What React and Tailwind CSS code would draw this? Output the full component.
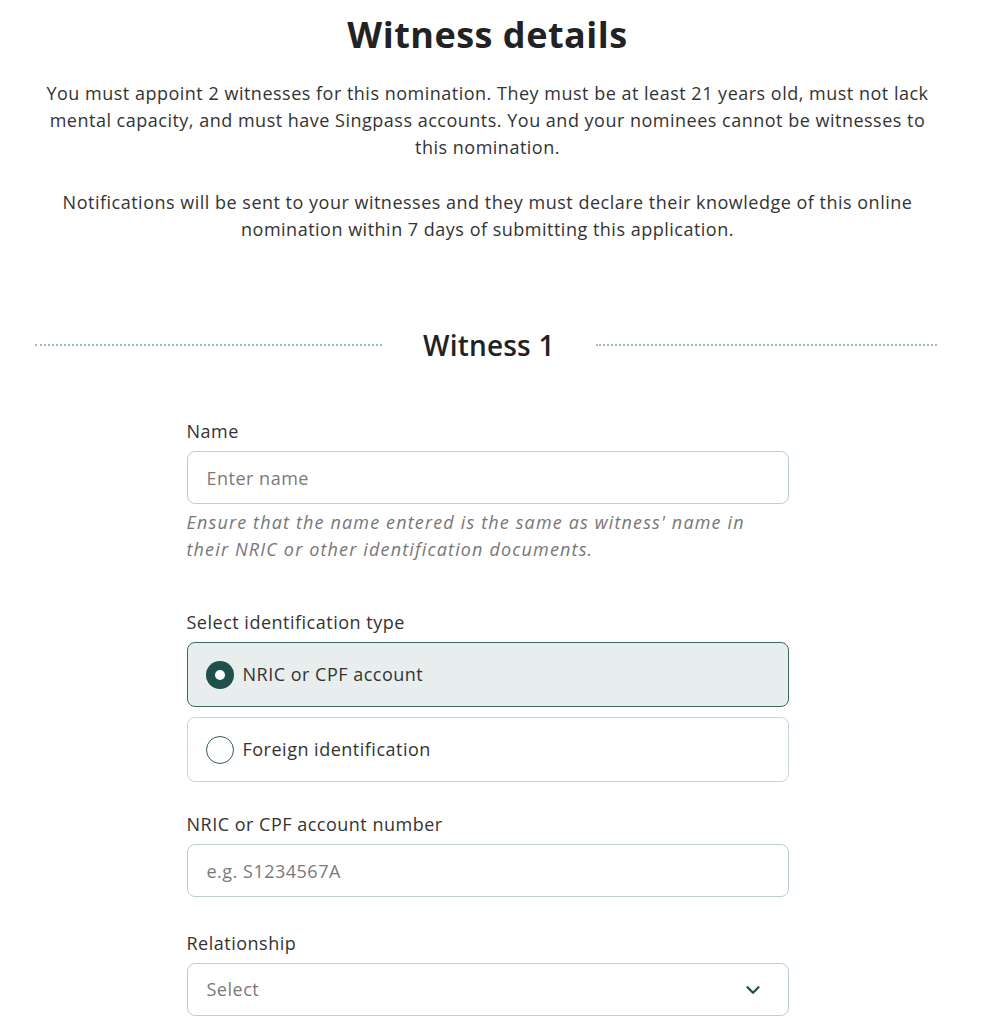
import { ChevronDown } from "lucide-react";

const font = { fontFamily: '"Open Sans", "Noto Sans", sans-serif' };

const Label = ({ children }) => (
  <div className="text-[18px] leading-[24px] tracking-[0.5px] text-[#333] mb-[8px]">{children}</div>
);

const TextField = ({ placeholder }) => (
  <input
    type="text"
    placeholder={placeholder}
    className="w-full h-[53px] px-[19px] rounded-[8px] border border-[#b9d0cc] bg-white text-[18px] tracking-[0.5px] text-[#333] placeholder:text-[#7a7a7a] outline-none"
  />
);

const Radio = ({ checked }) =>
  checked ? (
    <span className="w-[28px] h-[28px] rounded-full bg-[#1f5049] flex items-center justify-center shrink-0">
      <span className="w-[10px] h-[10px] rounded-full bg-white" />
    </span>
  ) : (
    <span className="w-[28px] h-[28px] rounded-full border-[1.5px] border-[#2e5d57] bg-white shrink-0" />
  );

const RadioCard = ({ label, checked }) => (
  <label
    className={`flex items-center gap-[9px] h-[65px] px-[18px] rounded-[8px] border cursor-pointer ${
      checked ? "bg-[#e8eeed] border-[#3c6862]" : "bg-white border-[#c3d6d3]"
    }`}
  >
    <Radio checked={checked} />
    <span className="text-[18px] tracking-[0.5px] text-[#333]">{label}</span>
  </label>
);

export default function App() {
  return (
    <div className="bg-white min-h-screen w-[975px] pt-[14px]" style={font}>
      <h1 className="text-center text-[36px] leading-[42px] tracking-[0.5px] font-bold text-[#222]">
        Witness details
      </h1>

      <div className="mt-[24px] text-center text-[18px] leading-[27px] tracking-[0.5px] text-[#333]">
        <p>
          You must appoint 2 witnesses for this nomination. They must be at least 21 years old, must not lack
          <br />
          mental capacity, and must have Singpass accounts. You and your nominees cannot be witnesses to
          <br />
          this nomination.
        </p>
        <p className="mt-[28px]">
          Notifications will be sent to your witnesses and they must declare their knowledge of this online
          <br />
          nomination within 7 days of submitting this application.
        </p>
      </div>

      <div className="flex items-center ml-[35px] mr-[38px] mt-[85px] gap-[41px]">
        <div className="w-[347px] border-t-2 border-dotted border-[#9dbcb7]" />
        <h2 className="text-[28px] leading-[34px] tracking-[0.2px] font-semibold text-[#222]">Witness 1</h2>
        <div className="flex-1 border-t-2 border-dotted border-[#9dbcb7]" />
      </div>

      <div className="w-[602px] mx-auto mt-[57px]">
        <Label>Name</Label>
        <TextField placeholder="Enter name" />
        <p className="mt-[5px] text-[18px] leading-[27px] tracking-[1.15px] italic text-[#777]">
          Ensure that the name entered is the same as witness' name in
          <br />
          their NRIC or other identification documents.
        </p>

        <div className="mt-[47px]">
          <Label>Select identification type</Label>
          <div className="flex flex-col gap-[10px]">
            <RadioCard label="NRIC or CPF account" checked />
            <RadioCard label="Foreign identification" />
          </div>
        </div>

        <div className="mt-[30px]">
          <Label>NRIC or CPF account number</Label>
          <TextField placeholder="e.g. S1234567A" />
        </div>

        <div className="mt-[34px]">
          <Label>Relationship</Label>
          <button
            type="button"
            className="w-full h-[53px] px-[19px] rounded-[8px] border border-[#b9d0cc] bg-white flex items-center justify-between"
          >
            <span className="text-[18px] tracking-[0.5px] text-[#7a7a7a]">Select</span>
            <ChevronDown size={22} strokeWidth={2.5} className="text-[#1f5049] mr-[5px]" />
          </button>
        </div>
      </div>
    </div>
  );
}
